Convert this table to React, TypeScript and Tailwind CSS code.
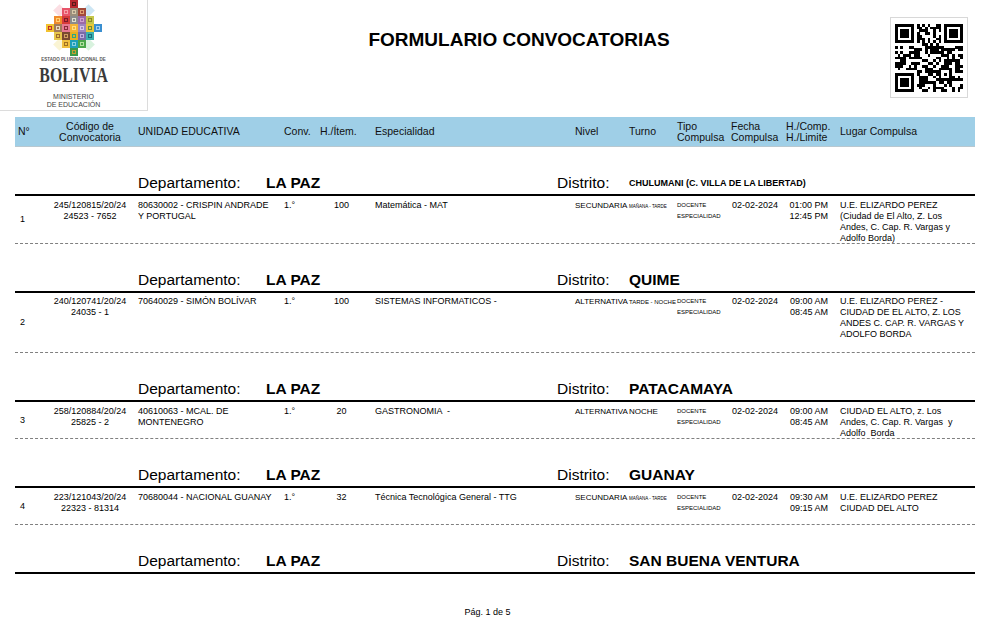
import React from 'react';

function Mosaic() {
  const cells: { r: number; c: number; col: string; in: string }[] = [
    { r: 0, c: 3, col: '#b8292f', in: '#5a1a1a' },
    { r: 1, c: 2, col: '#e8546a', in: '#f5a0a8' },
    { r: 1, c: 3, col: '#9a8f7c', in: '#d8c8a8' },
    { r: 1, c: 4, col: '#a34a3a', in: '#e0a070' },
    { r: 2, c: 1, col: '#f08a2c', in: '#ffd070' },
    { r: 2, c: 2, col: '#d63a3a', in: '#7a1a2a' },
    { r: 2, c: 3, col: '#8c8c8c', in: '#e0e0d0' },
    { r: 2, c: 4, col: '#9b6aa8', in: '#d0a0d0' },
    { r: 2, c: 5, col: '#c5c74a', in: '#8a8a2a' },
    { r: 3, c: 0, col: '#f2c230', in: '#c0302a' },
    { r: 3, c: 1, col: '#a07a5a', in: '#e8d8c0' },
    { r: 3, c: 2, col: '#e67a92', in: '#8a2a3a' },
    { r: 3, c: 3, col: '#f5b335', in: '#ffe080' },
    { r: 3, c: 4, col: '#9d87c0', in: '#d8c8e8' },
    { r: 3, c: 5, col: '#e8c838', in: '#6a8a3a' },
    { r: 3, c: 6, col: '#3a8fd0', in: '#a0d0f0' },
    { r: 4, c: 1, col: '#e6c64a', in: '#a06a2a' },
    { r: 4, c: 2, col: '#7a4a30', in: '#d0a060' },
    { r: 4, c: 3, col: '#e8b020', in: '#2aa88a' },
    { r: 4, c: 4, col: '#7a6aa8', in: '#c0b0e0' },
    { r: 4, c: 5, col: '#3ab0b0', in: '#1a6a7a' },
    { r: 5, c: 2, col: '#f0c040', in: '#a07020' },
    { r: 5, c: 3, col: '#1f9fb8', in: '#8ad0e0' },
    { r: 5, c: 4, col: '#4aa84a', in: '#b0e0a0' },
    { r: 6, c: 3, col: '#3a9a4a', in: '#c8a030' },
  ];
  const s = 8;
  return (
    <svg width="56" height="56" viewBox="0 0 56 56">
      <rect x="9" y="6" width="9" height="9" fill="#f8c8d0" opacity="0.6" transform="rotate(45 13.5 10.5)" />
      <rect x="38" y="6" width="9" height="9" fill="#b8dcf0" opacity="0.7" transform="rotate(45 42.5 10.5)" />
      <rect x="9" y="40" width="9" height="9" fill="#f8f0c0" opacity="0.7" transform="rotate(45 13.5 44.5)" />
      <rect x="38" y="40" width="9" height="9" fill="#c8ecd0" opacity="0.7" transform="rotate(45 42.5 44.5)" />
      {cells.map((k, i) => (
        <g key={i}>
          <rect x={k.c * s} y={k.r * s} width={s} height={s} fill={k.col} />
          <rect x={k.c * s + 2} y={k.r * s + 2} width={4} height={4} fill={k.in} />
          <rect x={k.c * s + 3} y={k.r * s + 3} width={2} height={2} fill={k.col} />
        </g>
      ))}
    </svg>
  );
}

function QR() {
  const n = 25;
  const m = 2.72;
  let seed = 987654;
  const rnd = () => {
    seed = (seed * 1103515245 + 12345) % 2147483648;
    return seed / 2147483648;
  };
  const inFinder = (r: number, c: number) =>
    (r < 8 && c < 8) || (r < 8 && c >= n - 8) || (r >= n - 8 && c < 8);
  const inAlign = (r: number, c: number) => r >= 16 && r <= 20 && c >= 16 && c <= 20;
  const rects: React.ReactElement[] = [];
  for (let r = 0; r < n; r++) {
    for (let c = 0; c < n; c++) {
      let on = false;
      if (inFinder(r, c)) {
        const fr = r < 8 ? r : r - (n - 7);
        const fc = c < 8 ? c : c - (n - 7);
        if (fr < 0 || fc < 0 || fr > 6 || fc > 6) on = false;
        else {
          const d = Math.max(Math.abs(fr - 3), Math.abs(fc - 3));
          on = d === 3 || d <= 1;
        }
      } else if (inAlign(r, c)) {
        const d = Math.max(Math.abs(r - 18), Math.abs(c - 18));
        on = d === 2 || d === 0;
      } else if (r === 6) {
        on = c % 2 === 0;
      } else if (c === 6) {
        on = r % 2 === 0;
      } else {
        on = rnd() < 0.5;
      }
      if (on) rects.push(<rect key={r * n + c} x={c * m} y={r * m} width={m + 0.05} height={m + 0.05} fill="#000" />);
    }
  }
  return (
    <svg width={n * m} height={n * m} viewBox={`0 0 ${n * m} ${n * m}`} shapeRendering="crispEdges">
      {rects}
    </svg>
  );
}

function GroupHeader({ distrito, small }: { distrito: string; small?: boolean }) {
  return (
    <div className="h-[49px] border-b-2 border-black flex items-end pb-[2px]">
      <div className="w-[123px] shrink-0" />
      <div className="w-[128px] shrink-0 text-[15.5px] leading-[18px]">Departamento:</div>
      <div className="w-[291px] shrink-0 text-[15.5px] leading-[18px] font-bold">LA PAZ</div>
      <div className="w-[72px] shrink-0 text-[15.5px] leading-[18px]">Distrito:</div>
      <div className={small ? 'text-[9px] font-bold leading-[18px] whitespace-nowrap' : 'text-[15.5px] font-bold leading-[18px] whitespace-nowrap'}>
        {distrito}
      </div>
    </div>
  );
}

type RowProps = {
  h: string;
  pt: string;
  n: string;
  cod: string[];
  ue: string[];
  item: string;
  esp: string;
  nivel: string;
  turno: React.ReactNode;
  times: string[];
  lugar: string[];
};

function Row(p: RowProps) {
  return (
    <div className={`${p.h} border-b border-dashed border-[#808080] flex text-[9px] leading-[11px] text-black`}>
      <div className="w-[35px] shrink-0 pl-[5px] flex items-center">{p.n}</div>
      <div className={`w-[80px] shrink-0 text-center ${p.pt}`}>
        {p.cod.map((l, i) => (
          <div key={i} className="whitespace-nowrap">{l}</div>
        ))}
      </div>
      <div className={`w-[150px] shrink-0 pl-[8px] ${p.pt}`}>
        {p.ue.map((l, i) => (
          <div key={i} className="whitespace-nowrap">{l}</div>
        ))}
      </div>
      <div className={`w-[36px] shrink-0 pl-[4px] ${p.pt}`}>1.°</div>
      <div className={`w-[51px] shrink-0 text-center ${p.pt}`}>{p.item}</div>
      <div className={`w-[208px] shrink-0 pl-[8px] whitespace-pre ${p.pt}`}>{p.esp}</div>
      <div className={`w-[54px] shrink-0 text-[8px] whitespace-nowrap ${p.pt}`}>{p.nivel}</div>
      <div className={`w-[48px] shrink-0 whitespace-nowrap ${p.pt}`}>{p.turno}</div>
      <div className={`w-[54px] shrink-0 text-[6px] ${p.pt}`}>
        <div className="leading-[11px]">DOCENTE</div>
        <div className="leading-[11px]">ESPECIALIDAD</div>
      </div>
      <div className={`w-[55px] shrink-0 pl-[1px] ${p.pt}`}>02-02-2024</div>
      <div className={`w-[54px] shrink-0 pr-[12px] text-right ${p.pt}`}>
        {p.times.map((l, i) => (
          <div key={i} className="whitespace-nowrap">{l}</div>
        ))}
      </div>
      <div className={`flex-1 ${p.pt}`}>
        {p.lugar.map((l, i) => (
          <div key={i} className="whitespace-pre">{l}</div>
        ))}
      </div>
    </div>
  );
}

export default function App() {
  return (
    <div className="w-[1000px] h-[622px] bg-white overflow-hidden font-['Liberation_Sans',Arial,sans-serif] text-black relative">
      {/* Top header */}
      <div className="flex h-[111px]">
        <div className="w-[148px] h-[111px] shrink-0 border-r border-b border-[#dcdcdc] flex flex-col items-center">
          <Mosaic />
          <div className="mt-[1px] text-[4.5px] leading-[5px] font-bold text-[#555] whitespace-nowrap">ESTADO PLURINACIONAL DE</div>
          <div className="text-[22px] leading-[25px] font-bold text-[#3a3a3a] font-['Liberation_Serif',serif] scale-x-72 whitespace-nowrap">BOLIVIA</div>
          <div className="mt-[6px] text-[7px] leading-[8px] text-[#444] whitespace-nowrap">MINISTERIO</div>
          <div className="text-[7px] leading-[8px] text-[#444] whitespace-nowrap">DE EDUCACIÓN</div>
        </div>
        <div className="flex-1 text-center pt-[29px] text-[19px] leading-[22px] font-bold">FORMULARIO CONVOCATORIAS</div>
        <div className="w-[78px] h-[81px] mt-[17px] mr-[32px] shrink-0 border border-[#d8d8d8] bg-white flex items-center justify-center">
          <QR />
        </div>
      </div>

      {/* Column header bar */}
      <div className="ml-[15px] w-[960px] mt-[6px] h-[30px] bg-[#9fcfe7] border-b border-[#b8c8d0] flex items-center text-[10.5px] leading-[11px] text-[#111]">
        <div className="w-[35px] shrink-0 pl-[3px]">N°</div>
        <div className="w-[80px] shrink-0 text-center">
          <div>Código de</div>
          <div>Convocatoria</div>
        </div>
        <div className="w-[150px] shrink-0 pl-[8px] whitespace-nowrap">UNIDAD EDUCATIVA</div>
        <div className="w-[36px] shrink-0 pl-[4px]">Conv.</div>
        <div className="w-[51px] shrink-0 pl-[4px] whitespace-nowrap">H./Ítem.</div>
        <div className="w-[208px] shrink-0 pl-[8px]">Especialidad</div>
        <div className="w-[54px] shrink-0">Nivel</div>
        <div className="w-[48px] shrink-0">Turno</div>
        <div className="w-[54px] shrink-0">
          <div>Tipo</div>
          <div>Compulsa</div>
        </div>
        <div className="w-[55px] shrink-0">
          <div>Fecha</div>
          <div>Compulsa</div>
        </div>
        <div className="w-[54px] shrink-0">
          <div>H./Comp.</div>
          <div>H./Limite</div>
        </div>
        <div className="flex-1">Lugar Compulsa</div>
      </div>

      <div className="ml-[15px] w-[960px]">
        <GroupHeader distrito="CHULUMANI (C. VILLA DE LA LIBERTAD)" small />
        <Row
          h="h-[48px]"
          pt="pt-[4px]"
          n="1"
          cod={['245/120815/20/24', '24523 - 7652']}
          ue={['80630002 - CRISPIN ANDRADE', 'Y PORTUGAL']}
          item="100"
          esp="Matemática - MAT"
          nivel="SECUNDARIA"
          turno={<span className="text-[4.5px] inline-block pt-[2px] leading-[9px]">MAÑANA - TARDE</span>}
          times={['01:00 PM', '12:45 PM']}
          lugar={['U.E. ELIZARDO PEREZ', '(Ciudad de El Alto, Z. Los', 'Andes, C. Cap. R. Vargas y', 'Adolfo Borda)']}
        />
        <GroupHeader distrito="QUIME" />
        <Row
          h="h-[60px]"
          pt="pt-[3px]"
          n="2"
          cod={['240/120741/20/24', '24035 - 1']}
          ue={['70640029 - SIMÓN BOLÍVAR']}
          item="100"
          esp="SISTEMAS INFORMATICOS -"
          nivel="ALTERNATIVA"
          turno={<span className="text-[6px] inline-block pt-[1px] leading-[10px]">TARDE - NOCHE</span>}
          times={['09:00 AM', '08:45 AM']}
          lugar={['U.E. ELIZARDO PEREZ -', 'CIUDAD DE EL ALTO, Z. LOS', 'ANDES C. CAP. R. VARGAS Y', 'ADOLFO BORDA']}
        />
        <GroupHeader distrito="PATACAMAYA" />
        <Row
          h="h-[37px]"
          pt="pt-[4px]"
          n="3"
          cod={['258/120884/20/24', '25825 - 2']}
          ue={['40610063 - MCAL. DE', 'MONTENEGRO']}
          item="20"
          esp="GASTRONOMIA  -"
          nivel="ALTERNATIVA"
          turno={<span className="text-[8px]">NOCHE</span>}
          times={['09:00 AM', '08:45 AM']}
          lugar={['CIUDAD EL ALTO, z. Los', 'Andes, C. Cap. R. Vargas  y', 'Adolfo  Borda']}
        />
        <GroupHeader distrito="GUANAY" />
        <Row
          h="h-[37px]"
          pt="pt-[4px]"
          n="4"
          cod={['223/121043/20/24', '22323 - 81314']}
          ue={['70680044 - NACIONAL GUANAY']}
          item="32"
          esp="Técnica Tecnológica General - TTG"
          nivel="SECUNDARIA"
          turno={<span className="text-[4.5px] inline-block pt-[2px] leading-[9px]">MAÑANA - TARDE</span>}
          times={['09:30 AM', '09:15 AM']}
          lugar={['U.E. ELIZARDO PEREZ', 'CIUDAD DEL ALTO']}
        />
        <GroupHeader distrito="SAN BUENA VENTURA" />
      </div>

      <div className="w-[975px] mt-[33px] text-center text-[9px] leading-[11px]">Pág. 1 de 5</div>
    </div>
  );
}
